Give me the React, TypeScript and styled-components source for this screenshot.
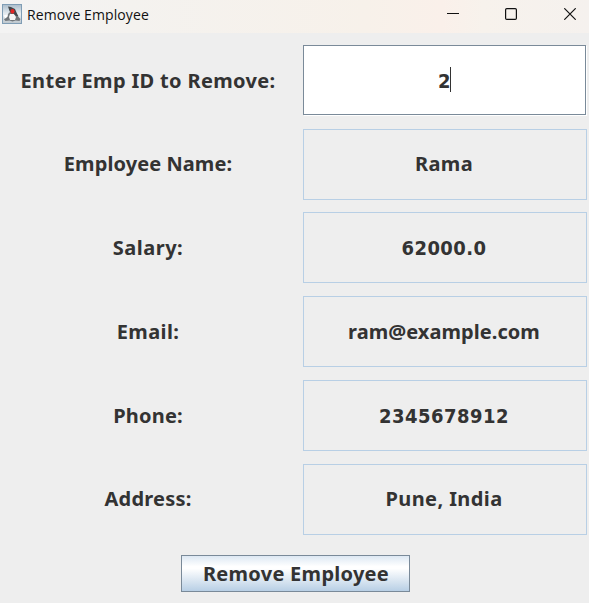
import React from 'react';
import styled, { createGlobalStyle, css } from 'styled-components';

const GlobalStyle = createGlobalStyle`
  * { box-sizing: border-box; }
  body { margin: 0; background: #eeeeee; overflow: hidden; }
`;

const Window = styled.div`
  width: 589px;
  height: 603px;
  display: flex;
  flex-direction: column;
  background: #eeeeee;
  color: #333333;
  font: bold 20px/24px 'Noto Sans', sans-serif;
`;

const TitleBar = styled.header`
  height: 33px;
  display: flex;
  align-items: flex-start;
  padding-left: 2px;
  background: linear-gradient(90deg, #f3f3f3 0%, #f4f2ef 22%, #f7f1ea 62%, #faf0ea 75%, #f7f2ec 82%, #f5f1ee 100%);
`;

const AppIcon = styled.svg`
  width: 20px;
  height: 20px;
  margin-top: 4px;
`;

const Title = styled.h1`
  flex: 1;
  margin: 5px 0 0 5px;
  color: #111;
  font: 400 14px/20px 'Open Sans', 'Noto Sans', sans-serif;
  letter-spacing: 0.1px;
`;

const Controls = styled.div`
  display: flex;
  padding: 8px 13px 0 0;
`;

const ControlIcon = styled.svg`
  width: 12px;
  height: 12px;
  fill: none;
  stroke: #111;
  & + & { margin-left: 46px; }
  & + & + & { margin-left: 47px; }
`;

const Form = styled.main`
  display: grid;
  grid-template-columns: 303px 284px;
  grid-template-rows: 84px 83px 84px 84px 84px 71px;
  padding-top: 12px;
`;

const Text = styled.span<{ $spacing: number; $numeric?: boolean }>`
  white-space: nowrap;
  letter-spacing: ${(p) => p.$spacing}px;
  ${(p) => p.$numeric && css`font-family: 'DejaVu Sans Condensed', 'DejaVu Sans', sans-serif; font-stretch: condensed;`}
`;

const Label = styled.label<{ $lift: number }>`
  height: 71px;
  padding: 0 7px ${(p) => p.$lift}px 0;
  display: flex;
  align-items: center;
  justify-content: center;
`;

const Field = styled.div<{ $editable: boolean; $lift: number }>`
  height: 71px;
  padding: 0 2px ${(p) => p.$lift}px 0;
  display: flex;
  align-items: center;
  justify-content: center;
  border: 1px solid #b8cfe5;
  ${(p) =>
    p.$editable &&
    css`
      width: 283px;
      height: 70px;
      padding: 1px 0 0 0;
      background: #fff;
      border-color: #7a8a99;
      box-shadow: 1px 1px 0 #fff;
    `}
`;

const Caret = styled.i`
  width: 1px;
  height: 25px;
  margin: 0 0 2px -1px;
  background: #333;
`;

const Actions = styled.footer`
  display: flex;
  justify-content: center;
  padding: 20px 0 0 2px;
`;

const RemoveButton = styled.button`
  width: 229px;
  height: 37px;
  padding: 0 0 0 1px;
  border: 1px solid #7a8a99;
  background: linear-gradient(#dde8f3 0%, #ffffff 30%, #ffffff 36%, #b8cfe5 100%);
  color: inherit;
  font: inherit;
`;

const rows = [
  { label: 'Enter Emp ID to Remove:', ls: 0.34, value: '2', vs: 0.4, lift: 0, numeric: true, editable: true },
  { label: 'Employee Name:', ls: 0.08, value: 'Rama', vs: 0.4, lift: 2 },
  { label: 'Salary:', ls: 0.5, value: '62000.0', vs: 0.4, lift: 0, numeric: true },
  { label: 'Email:', ls: 0.4, value: 'ram@example.com', vs: 0.05, lift: 0 },
  { label: 'Phone:', ls: 0.2, value: '2345678912', vs: 0.48, lift: 0, numeric: true },
  { label: 'Address:', ls: 0.2, value: 'Pune, India', vs: 0.4, lift: 2 },
];

function JavaIcon() {
  return (
    <AppIcon viewBox="0 0 20 20">
      <defs>
        <linearGradient id="tile" x2="0" y2="1">
          <stop stopColor="#a9bccb" />
          <stop offset=".5" stopColor="#e8eef2" />
          <stop offset="1" stopColor="#bcc5cc" />
        </linearGradient>
      </defs>
      <rect x=".5" y=".5" width="19" height="19" fill="url(#tile)" stroke="#7f9db5" />
      <path d="M2 15.500 5 12.500l2-4 6-.5 2.500 4L18.500 15l-1 2-4-.5-3 1-3-1-4 .5z" fill="#71767a" />
      <path d="M8 10h4l2 3-1 3H8l-1-3z" fill="#f4f4f4" />
      <path d="M1.500 11.500 5 10.500l1 1.500-2.500 2.500z" fill="#fff" />
      <path d="M6 2.500 9 3l4 2 1.500 3.500 2 4-3-1-2-2H9L7.500 7z" fill="#42474b" />
      <ellipse cx="10.500" cy="7.300" rx="2" ry="2.400" fill="#e32424" />
    </AppIcon>
  );
}

export default function App() {
  return (
    <>
      <GlobalStyle />
      <Window>
        <TitleBar>
          <JavaIcon />
          <Title>Remove Employee</Title>
          <Controls>
            <ControlIcon viewBox="0 0 12 12"><path d="M0 5.500h12" /></ControlIcon>
            <ControlIcon viewBox="0 0 12 12"><rect x=".6" y=".6" width="10.800" height="10.800" rx="1.200" strokeWidth="1.200" /></ControlIcon>
            <ControlIcon viewBox="0 0 12 12"><path d="M.3.300 11.700 11.700M11.700.300.300 11.700" strokeWidth="1.200" /></ControlIcon>
          </Controls>
        </TitleBar>
        <Form>
          {rows.map((r) => (
            <React.Fragment key={r.label}>
              <Label $lift={r.lift}><Text $spacing={r.ls}>{r.label}</Text></Label>
              <Field $editable={!!r.editable} $lift={r.lift}>
                <Text $spacing={r.vs} $numeric={r.numeric}>{r.value}</Text>
                {r.editable && <Caret />}
              </Field>
            </React.Fragment>
          ))}
        </Form>
        <Actions>
          <RemoveButton><Text $spacing={0.28}>Remove Employee</Text></RemoveButton>
        </Actions>
      </Window>
    </>
  );
}
